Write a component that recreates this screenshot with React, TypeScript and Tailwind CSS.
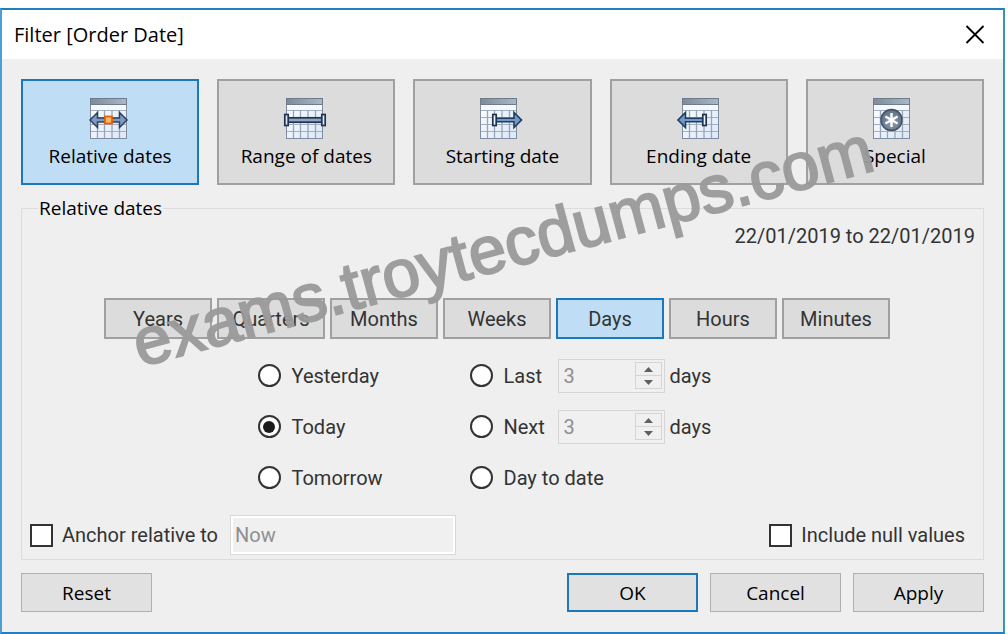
import React, { useState } from 'react';
import { clsx } from 'clsx';

type TileKind = 'relative' | 'range' | 'starting' | 'ending' | 'special';

interface Tile {
  kind: TileKind;
  label: string;
  calendarX: number;
}

const tiles: Tile[] = [
  { kind: 'relative', label: 'Relative dates', calendarX: 4 },
  { kind: 'range', label: 'Range of dates', calendarX: 4 },
  { kind: 'starting', label: 'Starting date', calendarX: 2 },
  { kind: 'ending', label: 'Ending date', calendarX: 7 },
  { kind: 'special', label: 'Special', calendarX: 2 },
];

const periods = ['Years', 'Quarters', 'Months', 'Weeks', 'Days', 'Hours', 'Minutes'];

const Calendar: React.FC<{ x: number }> = ({ x }) => (
  <g transform={`translate(${x} 0)`}>
    <rect x="0.5" y="0.5" width="36" height="40" fill="url(#cells)" stroke="#7f8da0" />
    <rect x="1" y="7" width="35" height="5" fill="#f5f9fe" />
    <rect x="0.5" y="0.5" width="36" height="6" fill="url(#header)" stroke="#6d7b8a" />
    <path d="M1 12.5H36M1 19.5H36M1 26.5H36M1 33.5H36" stroke="#a3afbf" />
    <path d="M7.5 12V40M14.5 12V40M22 12V40M29.5 12V40" stroke="#97a5b8" strokeWidth="1.3" />
  </g>
);

const TileIcon: React.FC<{ kind: TileKind; calendarX: number }> = ({ kind, calendarX }) => (
  <svg width="48" height="42" viewBox="0 0 48 42" aria-hidden="true">
    <defs>
      <linearGradient id="header" x1="0" x2="1">
        <stop offset="0" stopColor="#7e8b98" />
        <stop offset="1" stopColor="#a9b8c8" />
      </linearGradient>
      <linearGradient id="cells" x1="0" y1="0" x2="1" y2="1">
        <stop offset="0" stopColor="#ffffff" />
        <stop offset="1" stopColor="#dbe7f8" />
      </linearGradient>
      <radialGradient id="disc" cx="0.5" cy="0.6" r="0.6">
        <stop offset="0" stopColor="#8e9fb3" />
        <stop offset="1" stopColor="#5c6d80" />
      </radialGradient>
    </defs>
    <Calendar x={calendarX} />
    {kind === 'relative' && (
      <>
        <path
          d="M4 22L11.5 14.5V20H33.5V14.5L41 22L33.5 29.5V24H11.5V29.5Z"
          fill="#7f9ac0"
          stroke="#2c4460"
          strokeWidth="1.5"
        />
        <rect x="19" y="18.5" width="7" height="7" fill="#fbb765" stroke="#e2600f" strokeWidth="1.8" />
      </>
    )}
    {kind === 'range' && (
      <>
        <rect x="5" y="19.8" width="36" height="4.4" fill="#8ea6c4" stroke="#1f3350" strokeWidth="1.7" />
        <rect x="2.8" y="16.5" width="3.4" height="11" fill="#dfe9f5" stroke="#1f3350" strokeWidth="1.7" />
        <rect x="39.8" y="16.5" width="3.4" height="11" fill="#dfe9f5" stroke="#1f3350" strokeWidth="1.7" />
      </>
    )}
    {kind === 'starting' && (
      <>
        <path d="M18 20.2H36V14.5L43.5 22L36 29.5V23.8H18Z" fill="#7399c9" stroke="#1f3c5e" strokeWidth="1.6" />
        <rect x="14.8" y="16.5" width="3.4" height="11" fill="#eef4fb" stroke="#1f3350" strokeWidth="1.7" />
      </>
    )}
    {kind === 'ending' && (
      <>
        <path d="M28 20.2H10.5V14.5L3 22L10.5 29.5V23.8H28Z" fill="#7399c9" stroke="#1f3c5e" strokeWidth="1.6" />
        <rect x="27.8" y="16.5" width="3.4" height="11" fill="#eef4fb" stroke="#1f3350" strokeWidth="1.7" />
      </>
    )}
    {kind === 'special' && (
      <>
        <circle cx="20.5" cy="22" r="10.5" fill="url(#disc)" stroke="#3f5166" strokeWidth="1.4" />
        <path
          d="M20.5 15V29M14.4 18.5L26.6 25.5M26.6 18.5L14.4 25.5"
          stroke="#ffffff"
          strokeWidth="2.4"
        />
      </>
    )}
  </svg>
);

interface RadioProps {
  id: string;
  label: string;
  value: string;
  onChange: (value: string) => void;
}

const Radio: React.FC<RadioProps> = ({ id, label, value, onChange }) => (
  <label className="flex items-center gap-[11px]">
    <input
      type="radio"
      name="range"
      checked={value === id}
      onChange={() => onChange(id)}
      className="grid size-[23px] shrink-0 appearance-none place-content-center rounded-full border-2 border-[#333333] bg-white before:size-3 before:rounded-full checked:before:bg-[#1c1c1c]"
    />
    <span>{label}</span>
  </label>
);

const Spinner: React.FC<{ label: string }> = ({ label }) => (
  <div className="flex items-center gap-[5px]">
    <div className="flex h-[34px] w-[107px] items-center border border-[#d5d5d5] bg-[#f0f0f0] pr-[2px]">
      <input
        type="number"
        aria-label={label}
        defaultValue={3}
        disabled
        className="w-0 grow appearance-none pl-[5px] text-[#8f8f8f] [-moz-appearance:textfield] [&::-webkit-inner-spin-button]:appearance-none"
      />
      <div className="flex h-[27px] w-[27px] flex-col divide-y divide-[#d5d5d5] border border-[#d5d5d5]">
        <button disabled aria-label="Increase" className="flex flex-1 items-center justify-center">
          <svg width="9" height="5" viewBox="0 0 9 5">
            <path d="M0 5L4.5 0L9 5Z" fill="#606060" />
          </svg>
        </button>
        <button disabled aria-label="Decrease" className="flex flex-1 items-center justify-center">
          <svg width="9" height="5" viewBox="0 0 9 5">
            <path d="M0 0H9L4.5 5Z" fill="#606060" />
          </svg>
        </button>
      </div>
    </div>
    <span>days</span>
  </div>
);

const checkboxClass =
  'size-[23px] shrink-0 appearance-none border-2 border-[#333333] bg-white checked:bg-[#333333]';

const App: React.FC = () => {
  const [kind, setKind] = useState<TileKind>('relative');
  const [period, setPeriod] = useState('Days');
  const [range, setRange] = useState('today');

  return (
    <div className="bg-white pt-2 pr-[3px] font-['Open_Sans',sans-serif] text-[19px] leading-6 text-black">
      <div className="relative border-2 border-[#1f7fc0] border-x-[#4b9fd6] border-r-[#3b93b8] bg-[#efefef]">
        <header className="flex h-[49px] items-center justify-between bg-white pr-[18px] pl-3">
          <h1 className="text-[20px]">Filter [Order Date]</h1>
          <button aria-label="Close">
            <svg width="20" height="20" viewBox="0 0 20 20">
              <path d="M1.5 1L18.5 18M18.5 1L1.5 18" stroke="#000000" strokeWidth="1.8" />
            </svg>
          </button>
        </header>

        <main className="px-[19px] pt-5 pb-5">
          {/* Filter type */}
          <div className="grid grid-cols-5 gap-[18px]">
            {tiles.map((tile) => (
              <button
                key={tile.kind}
                onClick={() => setKind(tile.kind)}
                className={clsx(
                  'flex h-[106px] flex-col items-center gap-1 border-2 pt-[17px]',
                  kind === tile.kind ? 'border-[#1c78bd] bg-[#bfdef6]' : 'border-[#a0a0a0] bg-[#dcdcdc]'
                )}
              >
                <TileIcon kind={tile.kind} calendarX={tile.calendarX} />
                <span>{tile.label}</span>
              </button>
            ))}
          </div>

          <fieldset className="mt-[11px] border border-[#dcdcdc] px-2 pb-1 font-['Roboto',sans-serif] text-[20px] text-[#333333]">
            <legend className="ml-2 px-[1px] font-['Open_Sans',sans-serif] text-[19px] text-black">
              Relative dates
            </legend>
            <p className="mt-1 text-right">22/01/2019 to 22/01/2019</p>

            {/* Period */}
            <div className="mt-[50px] mr-[11px] flex justify-center gap-[5px]">
              {periods.map((name) => (
                <button
                  key={name}
                  onClick={() => setPeriod(name)}
                  className={clsx(
                    'h-[41px] w-[108px] border-2',
                    period === name ? 'border-[#1c78bd] bg-[#bfdef6]' : 'border-[#a0a0a0] bg-[#dcdcdc]'
                  )}
                >
                  {name}
                </button>
              ))}
            </div>

            {/* Range */}
            <div className="mt-[11px] mr-9 grid grid-cols-[212px_88px_154px] items-center justify-center *:h-[51px]">
              <Radio id="yesterday" label="Yesterday" value={range} onChange={setRange} />
              <Radio id="last" label="Last" value={range} onChange={setRange} />
              <Spinner label="Last days" />
              <Radio id="today" label="Today" value={range} onChange={setRange} />
              <Radio id="next" label="Next" value={range} onChange={setRange} />
              <Spinner label="Next days" />
              <Radio id="tomorrow" label="Tomorrow" value={range} onChange={setRange} />
              <div className="col-span-2 flex">
                <Radio id="to-date" label="Day to date" value={range} onChange={setRange} />
              </div>
            </div>

            <div className="mt-3 flex items-center justify-between">
              <div className="flex items-center gap-3">
                <label className="flex items-center gap-[9px]">
                  <input type="checkbox" className={checkboxClass} />
                  <span>Anchor relative to</span>
                </label>
                <input
                  type="text"
                  aria-label="Anchor date"
                  defaultValue="Now"
                  disabled
                  className="h-10 w-[226px] border border-[#d9d9d9] bg-[#f0f0f0] px-1 text-[#8f8f8f] inset-ring-2 inset-ring-white"
                />
              </div>
              <label className="mr-[10px] flex items-center gap-[9px]">
                <input type="checkbox" className={checkboxClass} />
                <span>Include null values</span>
              </label>
            </div>
          </fieldset>

          <footer className="mt-[13px] flex gap-3">
            <button className="mr-auto h-[39px] w-[131px] border border-[#b0b0b0] bg-[#e1e1e1]">Reset</button>
            <button className="h-[39px] w-[131px] border-2 border-[#1c78bd] bg-[#e1e1e1]">OK</button>
            <button className="h-[39px] w-[131px] border border-[#b0b0b0] bg-[#e1e1e1]">Cancel</button>
            <button className="h-[39px] w-[131px] border border-[#b0b0b0] bg-[#e1e1e1]">Apply</button>
          </footer>
        </main>

        {/* Watermark */}
        <div className="pointer-events-none absolute inset-x-0 top-[200px] flex justify-center">
          <span className="-rotate-15 font-['Liberation_Sans',sans-serif] text-[67px] leading-[72px] text-[#9a9a9a] opacity-95 [-webkit-text-stroke:2px_#9a9a9a]">
            exams.troytecdumps.com
          </span>
        </div>
      </div>
    </div>
  );
};

export default App;
